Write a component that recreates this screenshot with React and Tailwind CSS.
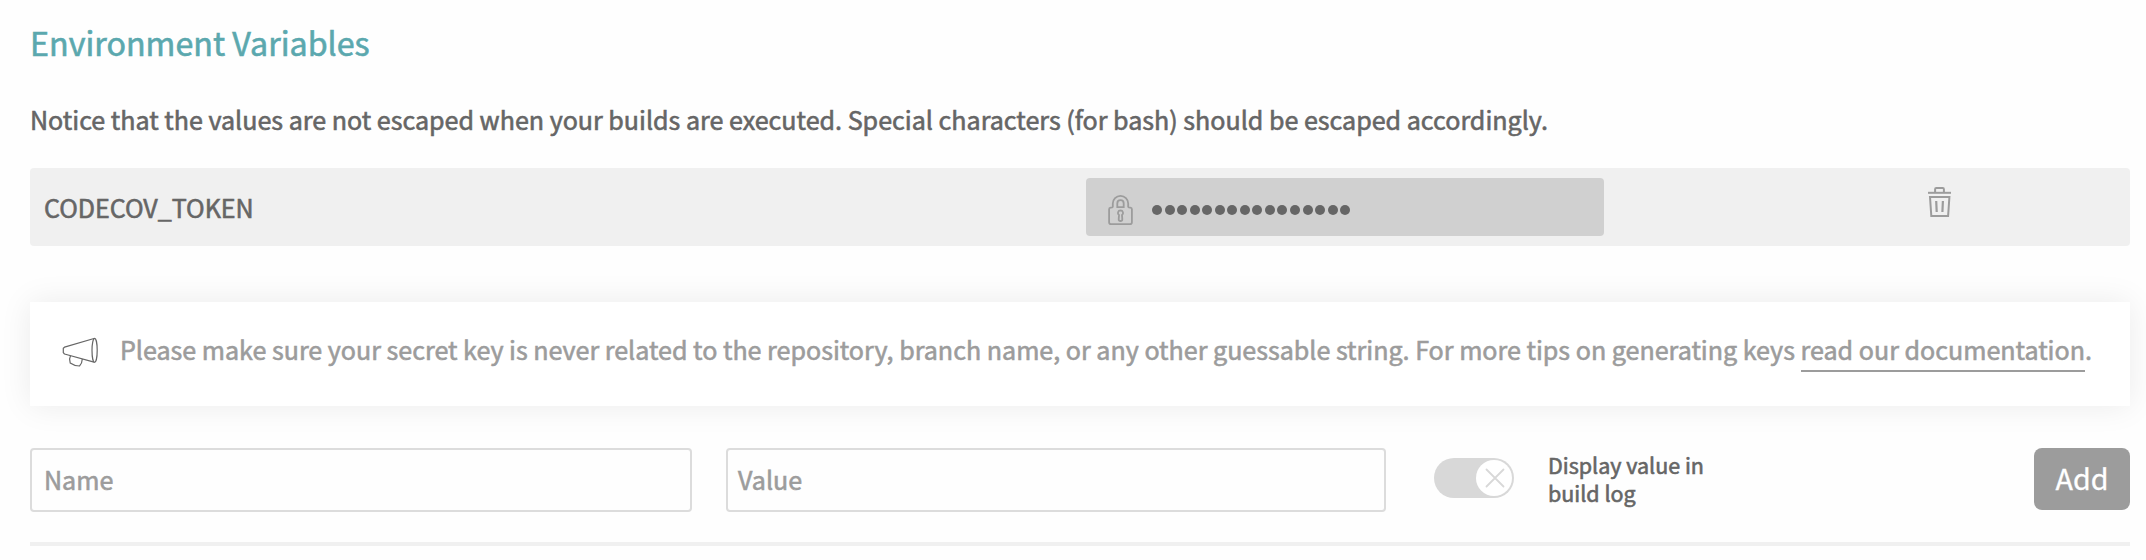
import React from "react";

function LockIcon() {
  return (
    <svg className="h-8 w-[27px] shrink-0" viewBox="0 0 27 32" fill="none" stroke="#9c9c9c" strokeWidth="1.8">
      <path d="M5.8 12.8V9.6a7.7 7.7 0 0 1 15.4 0v3.2c.3.6 1.2.9 2.2.9a1.6 1.6 0 0 1 1.5 1.6v12.9a1.9 1.9 0 0 1-1.9 1.9H4a1.9 1.9 0 0 1-1.9-1.9V15.3a1.6 1.6 0 0 1 1.5-1.6c1 0 1.9-.3 2.2-.9Z" />
      <path d="M10.3 13.1V9.4a3.2 3.2 0 0 1 6.4 0v3.7Z" />
      <path d="M13.5 16.4a2.6 2.6 0 0 0-1.5 4.7l-.3 4.1a1.8 1.8 0 0 0 3.6 0l-.3-4.1a2.6 2.6 0 0 0-1.5-4.7Z" />
    </svg>
  );
}

function TrashIcon() {
  return (
    <svg className="h-8 w-6" viewBox="0 0 24 32" fill="none" stroke="#9c9c9c" strokeWidth="2">
      <path d="M7.1 6V3.2A1.2 1.2 0 0 1 8.3 2h6.4a1.2 1.2 0 0 1 1.2 1.2V6" />
      <path d="M0 6.8h23" />
      <path d="M2 11h19.4l-1.3 19H3.3Z" />
      <path d="M8.2 15l.5 11M14.9 15l-.5 11" strokeWidth="2.2" />
    </svg>
  );
}

function MegaphoneIcon() {
  return (
    <svg className="h-8 w-10 shrink-0" viewBox="0 0 40 32" fill="none" stroke="#666" strokeWidth="1.2" strokeLinejoin="round">
      <path d="M34 2.5 4.5 11.2 3.3 12.200v4.500l1.200 1.300 29.500 8.200" />
      <ellipse cx="34.6" cy="14.3" rx="2.600" ry="12" />
      <path d="M10.5 19.7c-1.300 2.500-1.200 5-.3 7.300 2.500 1.800 6 2.900 9.300 3 1.500-1.400 2.700-4.600 2.800-7" />
    </svg>
  );
}

const dots = Array.from({ length: 16 });

export default function App() {
  return (
    <main
      className="flex h-[560px] w-[2146px] flex-col overflow-hidden bg-[#fefefe] pr-4 pl-[30px] text-[25.07px] leading-10 whitespace-nowrap text-[#666] [-webkit-text-stroke:0.6px]"
      style={{ fontFamily: '"Noto Sans CJK SC", "Noto Sans", sans-serif' }}
    >
      <h2 className="mt-[22px] text-[32.23px] leading-10 text-[#5ba8ae]">Environment Variables</h2>
      <p className="mt-[37px]">
        Notice that the values are not escaped when your builds are executed. Special characters (for bash) should be escaped accordingly.
      </p>

      <div className="mt-[29px] flex h-[78px] items-center rounded bg-[#f0f0f0] pl-3.5">
        <span className="w-[1042px]">CODECOV_TOKEN</span>
        <div className="flex h-[58px] w-[518px] items-center rounded bg-[#d0d0d0] pl-[21px]">
          <div className="mt-1.5"><LockIcon /></div>
          <div className="mt-1.5 ml-[18px] flex gap-[2.56px]">
            {dots.map((_, i) => (
              <span key={i} className="size-2.5 rounded-full bg-[#666]" />
            ))}
          </div>
        </div>
        <button className="mb-2.5 ml-[324px]">
          <TrashIcon />
        </button>
      </div>

      <div className="mt-14 flex h-[104px] bg-white pt-[27px] pl-[30px] text-[#9c9c9c] shadow-[0_0_30px_rgba(0,0,0,0.08)]">
        <div className="mt-[7px]"><MegaphoneIcon /></div>
        <p className="ml-5">
          Please make sure your secret key is never related to the repository, branch name, or any other guessable string. For more tips on generating keys{" "}
          <a className="border-b-2 border-[#9c9c9c] pb-[3px]">read our documentation</a>.
        </p>
      </div>

      <form className="mt-[42px] flex h-16 items-start">
        <div className="flex h-16 w-[662px] items-center rounded border-2 border-[#dcdcdc] pb-0.5 pl-3 text-[#9c9c9c]">Name</div>
        <div className="ml-[34px] flex h-16 w-[660px] items-center rounded border-2 border-[#dcdcdc] pb-0.5 pl-2.5 text-[#9c9c9c]">Value</div>
        <div className="mt-2.5 ml-12 flex h-10 w-20 items-center justify-end rounded-full bg-[#d8d8d8] pr-0.5">
          <div className="flex size-9 items-center justify-center rounded-full bg-white pl-0.5">
            <svg className="size-5" viewBox="0 0 20 20" stroke="#d8d8d8" strokeWidth="1.8" strokeLinecap="round">
              <path d="M1.5 1.5l17 17M18.5 1.5l-17 17" />
            </svg>
          </div>
        </div>
        <p className="mt-[3px] ml-[34px] text-[21.49px] leading-7">
          Display value in<br />build log
        </p>
        <button type="button" className="ml-auto h-[62px] w-24 rounded-lg bg-[#9c9c9c] pb-[3px] text-[28.65px] text-white [-webkit-text-stroke:0.3px]">
          Add
        </button>
      </form>
      <div className="mt-[30px] h-1 shrink-0 bg-[#f0f0f0]" />
    </main>
  );
}
